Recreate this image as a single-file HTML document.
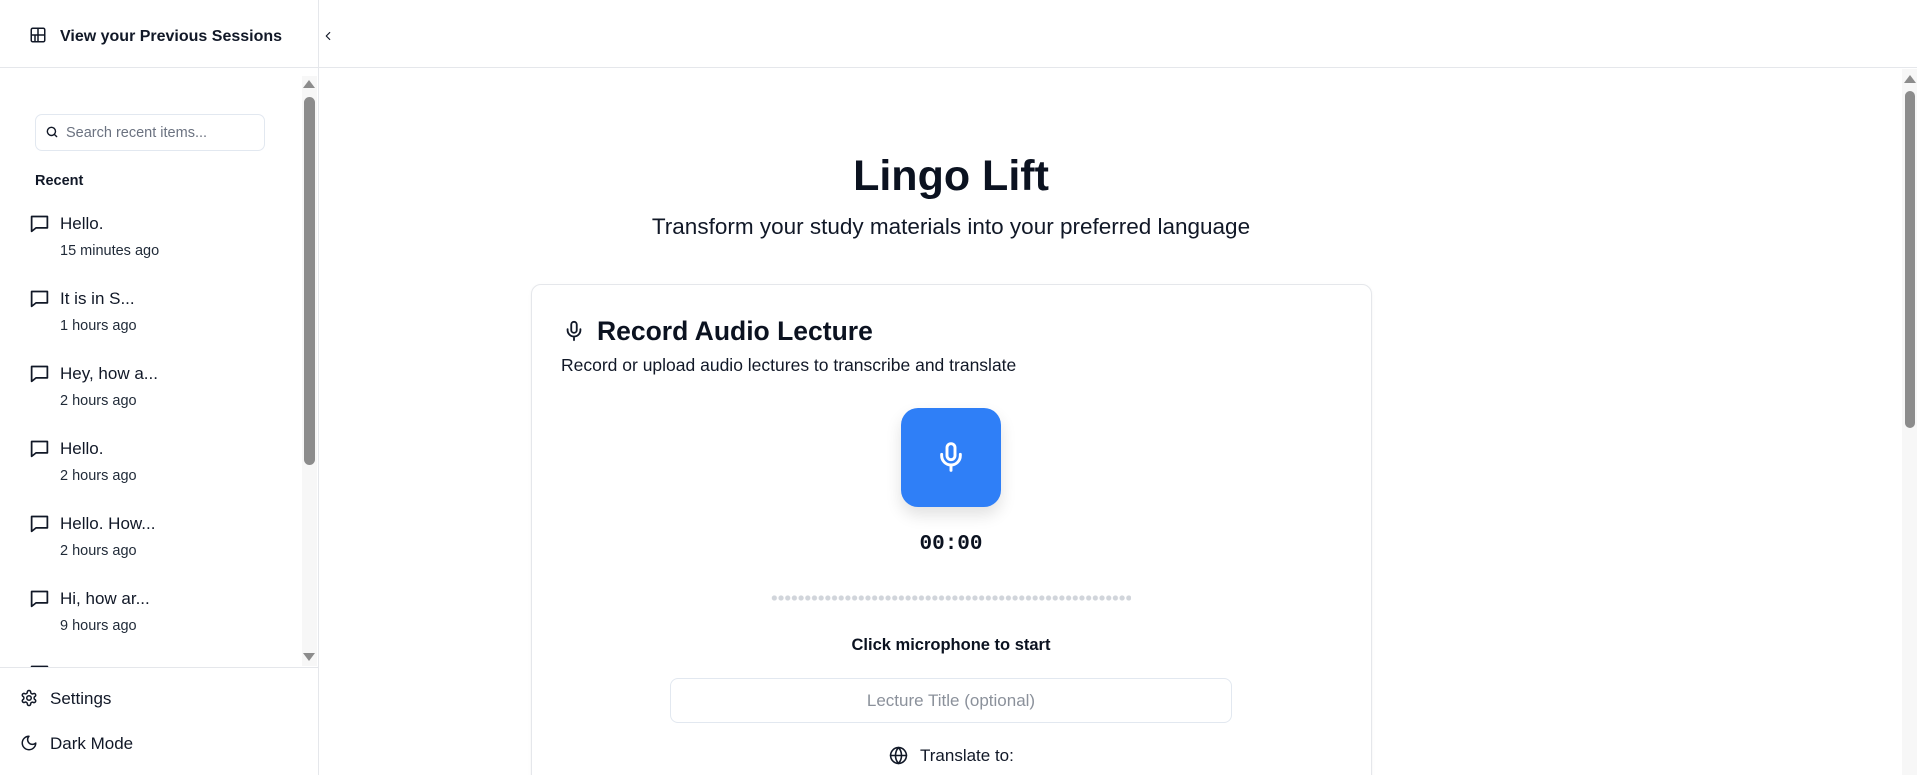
<!DOCTYPE html>
<html><head><meta charset="utf-8"><style>
*{box-sizing:border-box;margin:0;padding:0}
html,body{width:1917px;height:775px;overflow:hidden}
body{background:#fff;font-family:"Liberation Sans",sans-serif;color:#0b1220;position:relative}
.abs{position:absolute;white-space:nowrap}
.sb{left:0;top:0;width:319px;height:775px;border-right:1px solid #e5e7eb}
.hdr{left:0;top:0;width:1917px;height:68px;border-bottom:1px solid #e5e7eb}
svg{position:absolute;fill:none;stroke:#111827;stroke-width:2;stroke-linecap:round;stroke-linejoin:round}
.t{position:absolute;left:60px;font-size:17px;color:#111827;white-space:nowrap}
.d{position:absolute;left:60px;font-size:14.5px;color:#1f2937;white-space:nowrap}
.track{background:#f7f7f7}
.thumb{background:#8c8c8c;border-radius:6px}
.tri{width:0;height:0;border-left:6px solid transparent;border-right:6px solid transparent}
.c{left:0;width:1902px;text-align:center}
</style></head><body>
<div class="abs hdr"></div>
<div class="abs sb"></div>
<svg style="left:29px;top:26px" width="18" height="18" viewBox="0 0 24 24"><rect x="3" y="3" width="18" height="18" rx="2"/><path d="M3 12h18M12 3v18M8 12v9"/></svg>
<div class="abs" style="left:60px;top:28px;font-size:16px;font-weight:bold;color:#111827">View your Previous Sessions</div>
<svg style="left:321px;top:29px" width="14" height="14" viewBox="0 0 24 24"><path d="M15 18l-6-6 6-6"/></svg>

<div class="abs track" style="left:302px;top:76px;width:15px;height:590px"></div>
<div class="abs tri" style="left:303px;top:80px;border-bottom:8px solid #8c8c8c"></div>
<div class="abs thumb" style="left:304px;top:97px;width:11px;height:368px"></div>
<div class="abs tri" style="left:303px;top:653px;border-top:8px solid #8c8c8c"></div>

<div class="abs" style="left:35px;top:114px;width:230px;height:37px;border:1px solid #e2e8f0;border-radius:7px"></div>
<svg style="left:45px;top:125px;stroke-width:2.4" width="14" height="14" viewBox="0 0 24 24"><circle cx="11" cy="11" r="7"/><path d="M20 20l-4-4"/></svg>
<div class="abs" style="left:66px;top:125px;font-size:14.5px;color:#6b7280">Search recent items...</div>
<div class="abs" style="left:35px;top:173px;font-size:14.5px;font-weight:bold;color:#111827">Recent</div>

<svg style="left:29px;top:213px" width="21" height="21" viewBox="0 0 24 24"><path d="M3 4h18v13H8l-5 4z"/></svg>
<div class="t" style="top:214px">Hello.</div><div class="d" style="top:243px">15 minutes ago</div>
<svg style="left:29px;top:288px" width="21" height="21" viewBox="0 0 24 24"><path d="M3 4h18v13H8l-5 4z"/></svg>
<div class="t" style="top:289px">It is in S...</div><div class="d" style="top:318px">1 hours ago</div>
<svg style="left:29px;top:363px" width="21" height="21" viewBox="0 0 24 24"><path d="M3 4h18v13H8l-5 4z"/></svg>
<div class="t" style="top:364px">Hey, how a...</div><div class="d" style="top:393px">2 hours ago</div>
<svg style="left:29px;top:438px" width="21" height="21" viewBox="0 0 24 24"><path d="M3 4h18v13H8l-5 4z"/></svg>
<div class="t" style="top:439px">Hello.</div><div class="d" style="top:468px">2 hours ago</div>
<svg style="left:29px;top:513px" width="21" height="21" viewBox="0 0 24 24"><path d="M3 4h18v13H8l-5 4z"/></svg>
<div class="t" style="top:514px">Hello. How...</div><div class="d" style="top:543px">2 hours ago</div>
<svg style="left:29px;top:588px" width="21" height="21" viewBox="0 0 24 24"><path d="M3 4h18v13H8l-5 4z"/></svg>
<div class="t" style="top:589px">Hi, how ar...</div><div class="d" style="top:618px">9 hours ago</div>
<svg style="left:29px;top:663px" width="21" height="21" viewBox="0 0 24 24"><path d="M3 4h18v13H8l-5 4z"/></svg>

<div class="abs" style="left:0;top:667px;width:319px;height:108px;background:#fff;border-top:1px solid #e5e7eb;border-right:1px solid #e5e7eb"></div>
<svg style="left:20px;top:689px" width="18" height="18" viewBox="0 0 24 24"><circle cx="12" cy="12" r="3"/><path d="M12.2 2h-.4a2 2 0 0 0-2 2v.2a2 2 0 0 1-1 1.7l-.4.3a2 2 0 0 1-2 0l-.2-.1a2 2 0 0 0-2.7.7l-.2.4a2 2 0 0 0 .7 2.7l.2.1a2 2 0 0 1 1 1.7v.5a2 2 0 0 1-1 1.7l-.2.1a2 2 0 0 0-.7 2.7l.2.4a2 2 0 0 0 2.7.7l.2-.1a2 2 0 0 1 2 0l.4.3a2 2 0 0 1 1 1.7V20a2 2 0 0 0 2 2h.4a2 2 0 0 0 2-2v-.2a2 2 0 0 1 1-1.7l.4-.3a2 2 0 0 1 2 0l.2.1a2 2 0 0 0 2.7-.7l.2-.4a2 2 0 0 0-.7-2.7l-.2-.1a2 2 0 0 1-1-1.7v-.5a2 2 0 0 1 1-1.7l.2-.1a2 2 0 0 0 .7-2.7l-.2-.4a2 2 0 0 0-2.7-.7l-.2.1a2 2 0 0 1-2 0l-.4-.3a2 2 0 0 1-1-1.7V4a2 2 0 0 0-2-2z"/></svg>
<div class="abs" style="left:50px;top:689px;font-size:17px;color:#111827">Settings</div>
<svg style="left:20px;top:734px" width="18" height="18" viewBox="0 0 24 24"><path d="M12 3a6 6 0 0 0 9 9 9 9 0 1 1-9-9z"/></svg>
<div class="abs" style="left:50px;top:734px;font-size:17px;color:#111827">Dark Mode</div>

<div class="abs track" style="left:1902px;top:69px;width:15px;height:706px"></div>
<div class="abs tri" style="left:1904px;top:75px;border-bottom:8px solid #8c8c8c"></div>
<div class="abs thumb" style="left:1905px;top:91px;width:10px;height:337px"></div>

<div class="abs c" style="top:152px;font-size:43px;font-weight:bold;color:#0b1220">Lingo Lift</div>
<div class="abs c" style="top:214px;font-size:22.5px;color:#111827">Transform your study materials into your preferred language</div>

<div class="abs" style="left:531px;top:284px;width:841px;height:520px;border:1px solid #e5e7eb;border-radius:10px;box-shadow:0 1px 3px rgba(0,0,0,.05)"></div>
<svg style="left:563px;top:319px" width="22" height="24" viewBox="0 0 24 24"><rect x="9" y="2" width="6" height="12" rx="3"/><path d="M19 10v1a7 7 0 0 1-14 0v-1M12 18v4"/></svg>
<div class="abs" style="left:597px;top:316px;font-size:26.5px;font-weight:bold;color:#0b1220">Record Audio Lecture</div>
<div class="abs" style="left:561px;top:355px;font-size:17.5px;color:#111827">Record or upload audio lectures to transcribe and translate</div>

<div class="abs" style="left:901px;top:408px;width:100px;height:99px;background:#2f7ff7;border-radius:17px;box-shadow:0 8px 16px rgba(0,0,0,.12)"></div>
<svg style="left:935px;top:440px;stroke:#fff;stroke-width:2.2" width="32" height="34" viewBox="0 0 24 24"><rect x="9" y="2" width="6" height="12" rx="3"/><path d="M19 10v1a7 7 0 0 1-14 0v-1M12 18v4"/></svg>
<div class="abs c" style="top:533px;font-family:'Liberation Mono',monospace;font-size:21px;font-weight:bold;color:#0b1220">00:00</div>
<div class="abs" style="left:771px;top:595px;width:360px;height:6px;background:radial-gradient(circle,#d1d5db 2.4px,transparent 2.8px) 0 0/6.7px 6px repeat-x"></div>
<div class="abs c" style="top:636px;font-size:16.5px;font-weight:bold;color:#0b1220">Click microphone to start</div>
<div class="abs" style="left:670px;top:678px;width:562px;height:45px;border:1px solid #e2e8f0;border-radius:8px;text-align:center;line-height:43px;font-size:17px;color:#8b919b">Lecture Title (optional)</div>
<svg style="left:889px;top:746px" width="19" height="19" viewBox="0 0 24 24"><circle cx="12" cy="12" r="10"/><path d="M2 12h20M12 2a15 15 0 0 1 0 20M12 2a15 15 0 0 0 0 20"/></svg>
<div class="abs" style="left:920px;top:746px;font-size:17px;color:#111827">Translate to:</div>
</body></html>
